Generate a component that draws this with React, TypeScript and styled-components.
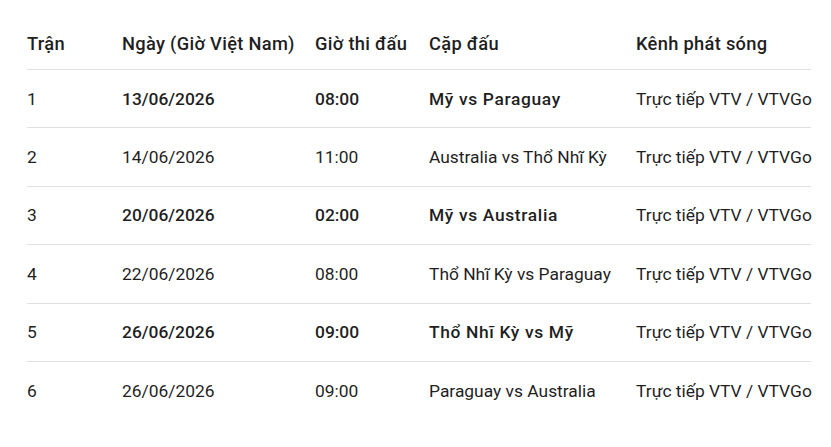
import React from "react";
import styled, { createGlobalStyle } from "styled-components";

const Global = createGlobalStyle`
  html, body { margin: 0; padding: 0; background: #ffffff; }
  body { font-family: "Roboto", "Liberation Sans", sans-serif; color: #1f1f1f; }
`;

const Wrap = styled.div`
  padding: 0 20px 0 27px;
`;

const Table = styled.table`
  border-collapse: collapse;
  width: 784px;
  table-layout: fixed;
`;

const HeadCell = styled.th<{ $w?: number }>`
  text-align: left;
  font-weight: 500;
  font-size: 18.3px;
  letter-spacing: 0.3px;
  height: 51px;
  padding: 18px 0 0 0;
  vertical-align: middle;
  border-bottom: 1px solid #e0e0e0;
  white-space: nowrap;
  width: ${(p) => (p.$w ? `${p.$w}px` : "auto")};
`;

const Row = styled.tr<{ $last?: boolean }>`
  border-bottom: ${(p) => (p.$last ? "none" : "1px solid #e0e0e0")};
`;

const Cell = styled.td<{ $bold?: boolean; $wide?: boolean }>`
  font-size: 17.4px;
  font-weight: ${(p) => (p.$bold ? 500 : 400)};
  letter-spacing: ${(p) => (p.$bold && p.$wide ? "0.65px" : "0")};
  height: 57.4px;
  padding: 0;
  white-space: nowrap;
  vertical-align: middle;
`;

const rows = [
  { n: "1", d: "13/06/2026", t: "08:00", m: "Mỹ vs Paraguay", bold: true },
  { n: "2", d: "14/06/2026", t: "11:00", m: "Australia vs Thổ Nhĩ Kỳ", bold: false },
  { n: "3", d: "20/06/2026", t: "02:00", m: "Mỹ vs Australia", bold: true },
  { n: "4", d: "22/06/2026", t: "08:00", m: "Thổ Nhĩ Kỳ vs Paraguay", bold: false },
  { n: "5", d: "26/06/2026", t: "09:00", m: "Thổ Nhĩ Kỳ vs Mỹ", bold: true },
  { n: "6", d: "26/06/2026", t: "09:00", m: "Paraguay vs Australia", bold: false },
];

export default function App() {
  return (
    <Wrap>
      <Global />
      <Table>
        <thead>
          <tr>
            <HeadCell $w={95}>Trận</HeadCell>
            <HeadCell $w={193}>Ngày (Giờ Việt Nam)</HeadCell>
            <HeadCell $w={114}>Giờ thi đấu</HeadCell>
            <HeadCell $w={207}>Cặp đấu</HeadCell>
            <HeadCell>Kênh phát sóng</HeadCell>
          </tr>
        </thead>
        <tbody>
          {rows.map((r, i) => (
            <Row key={r.n} $last={i === rows.length - 1}>
              <Cell>{r.n}</Cell>
              <Cell $bold={r.bold}>{r.d}</Cell>
              <Cell $bold={r.bold}>{r.t}</Cell>
              <Cell $bold={r.bold} $wide>
                {r.m}
              </Cell>
              <Cell>Trực tiếp VTV / VTVGo</Cell>
            </Row>
          ))}
        </tbody>
      </Table>
    </Wrap>
  );
}
